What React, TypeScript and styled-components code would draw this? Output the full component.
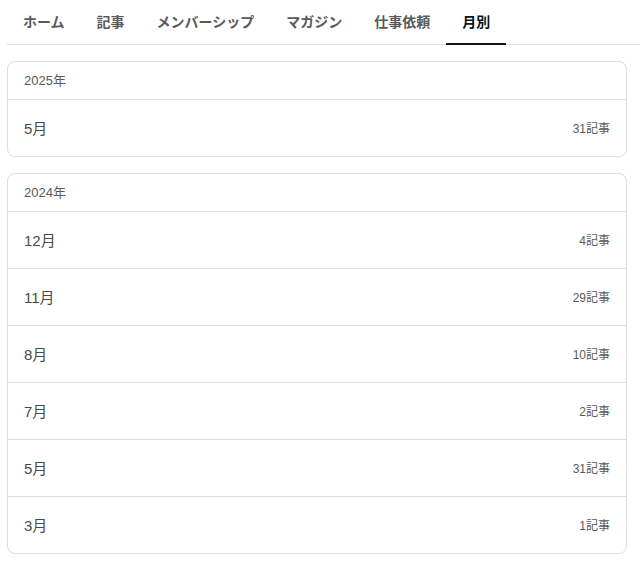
import React from 'react';
import styled, { createGlobalStyle } from 'styled-components';

const GlobalStyle = createGlobalStyle`
    * {
        box-sizing: border-box;
    }
    body {
        margin: 0;
        background: #fff;
        font-family: 'Liberation Sans', 'Noto Sans CJK JP', sans-serif;
        color: #333;
    }
`;

const Page = styled.div`
    padding-left: 7px;
`;

const TabBar = styled.nav`
    display: flex;
    height: 45px;
    border-bottom: 1px solid #ddd;
`;

const Tab = styled.div<{ $active?: boolean }>`
    display: flex;
    align-items: center;
    padding: 0 16px 2px;
    font-size: 14px;
    font-weight: bold;
    color: ${(props) => (props.$active ? '#08131a' : '#5a5a5a')};
    border-bottom: 2px solid ${(props) => (props.$active ? '#08131a' : 'transparent')};
    margin-bottom: -1px;
`;

const Content = styled.div`
    display: flex;
    flex-direction: column;
    gap: 16px;
    padding: 16px 13px 0 0;
`;

const YearCard = styled.section`
    border: 1px solid #ddd;
    border-radius: 8px;
    overflow: hidden;
`;

const YearHeader = styled.div`
    height: 38px;
    display: flex;
    align-items: center;
    padding: 0 16px 2px;
    font-size: 13px;
    color: #5a5a5a;
    border-bottom: 1px solid #ddd;
`;

const MonthRow = styled.div`
    height: 57px;
    display: flex;
    align-items: center;
    justify-content: space-between;
    padding: 0 16px 2px;
    border-bottom: 1px solid #ddd;

    &:last-child {
        border-bottom: 0;
        height: 56px;
    }
`;

const MonthLabel = styled.span`
    font-size: 15px;
    color: #4a4a4a;
`;

const Count = styled.span`
    font-size: 12px;
    color: #5a5a5a;
`;

const tabs = ['ホーム', '記事', 'メンバーシップ', 'マガジン', '仕事依頼', '月別'];

const archive = [
    { year: 2025, months: [{ m: 5, n: 31 }] },
    {
        year: 2024,
        months: [
            { m: 12, n: 4 },
            { m: 11, n: 29 },
            { m: 8, n: 10 },
            { m: 7, n: 2 },
            { m: 5, n: 31 },
            { m: 3, n: 1 },
        ],
    },
];

export default function App() {
    return (
        <Page>
            <GlobalStyle />
            <TabBar>
                {tabs.map((t) => (
                    <Tab key={t} $active={t === '月別'}>
                        {t}
                    </Tab>
                ))}
            </TabBar>
            <Content>
                {archive.map((y) => (
                    <YearCard key={y.year}>
                        <YearHeader>{y.year}年</YearHeader>
                        {y.months.map((mo) => (
                            <MonthRow key={mo.m}>
                                <MonthLabel>{mo.m}月</MonthLabel>
                                <Count>{mo.n}記事</Count>
                            </MonthRow>
                        ))}
                    </YearCard>
                ))}
            </Content>
        </Page>
    );
}
